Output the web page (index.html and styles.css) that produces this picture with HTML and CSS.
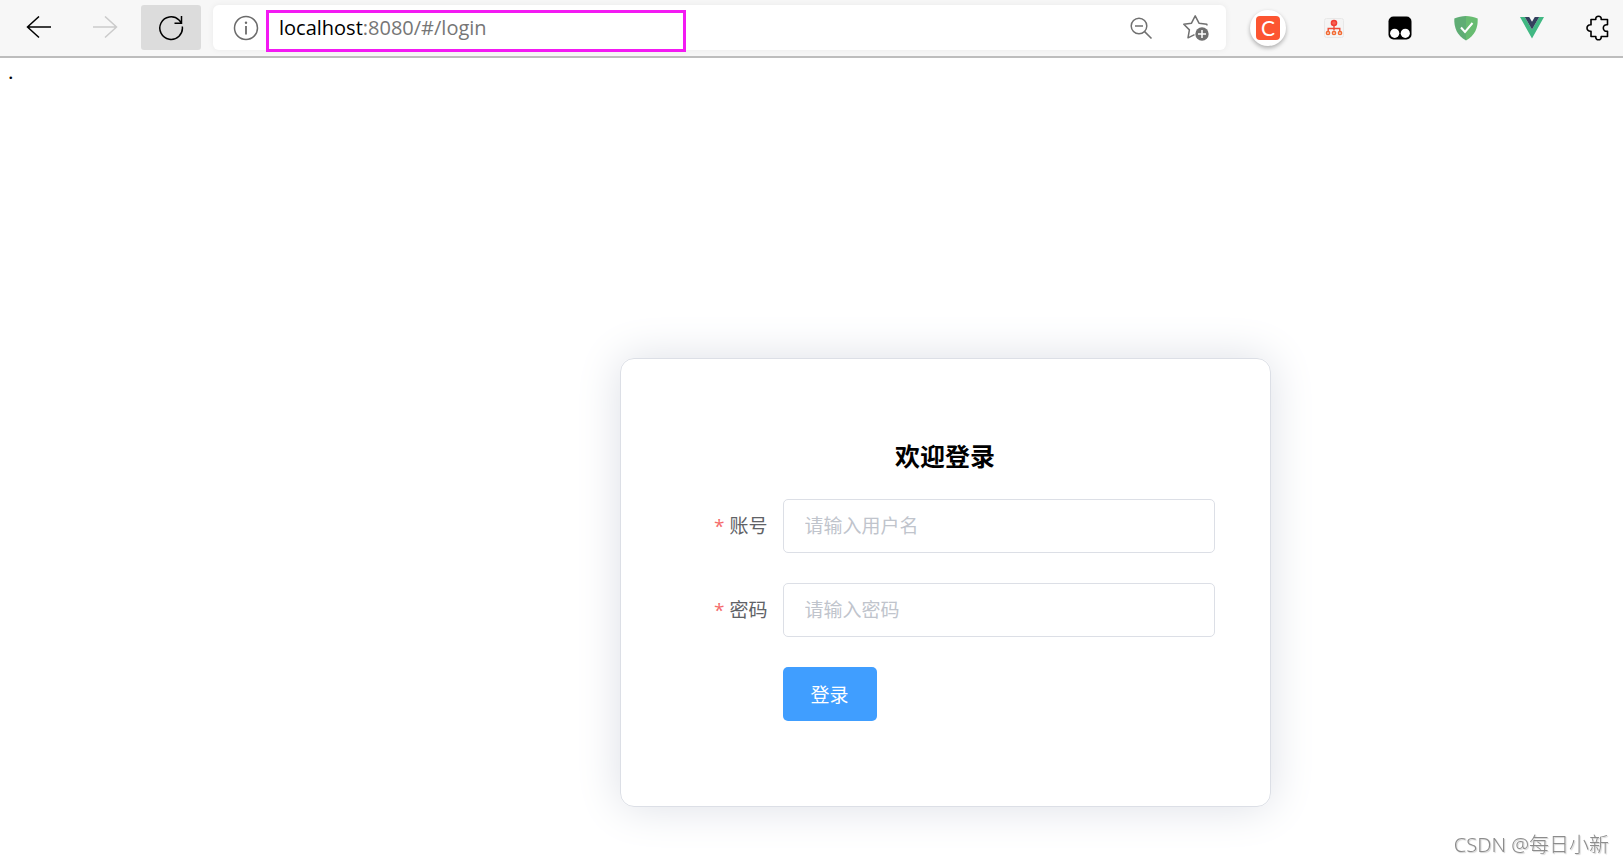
FILE: index.html
```html
<!DOCTYPE html>
<html lang="zh-CN">
<head>
<meta charset="utf-8">
<title>登录</title>
<link rel="stylesheet" href="styles.css">
</head>
<body>
<header class="toolbar">
  <nav class="nav">
    <button class="tool" type="button" aria-label="后退">
      <svg width="26" height="24" viewBox="0 0 26 24" fill="none" stroke="#000" stroke-width="1.5"><path d="M25 11H1.5M13 .5 1.500 11 13 21.500"/></svg>
    </button>
    <button class="tool" type="button" aria-label="前进" disabled>
      <svg width="26" height="24" viewBox="0 0 26 24" fill="none" stroke="#cbcbcb" stroke-width="1.500"><path d="M1 11h23.500M13 .5 24.500 11 13 21.500"/></svg>
    </button>
    <button class="tool tool-active" type="button" aria-label="刷新">
      <svg width="26" height="26" viewBox="0 0 26 26" fill="none" stroke="#000" stroke-width="1.500"><path d="M24.300 11.500A11.300 11.300 0 1 1 21 5L23.500 8M23.500 1V8.200H16.500"/></svg>
    </button>
  </nav>
  <div class="address">
    <svg width="26" height="26" viewBox="0 0 26 26" fill="none" stroke="#6b6b6b" stroke-width="1.500"><circle cx="13" cy="13" r="11.500"/><path d="M13 11v8.500" stroke-width="1.800"/><circle cx="13" cy="7.800" r="1.200" fill="#6b6b6b" stroke="none"/></svg>
    <div class="url" role="textbox" aria-label="地址" contenteditable="true" spellcheck="false"><span class="host">localhost</span>:8080/#/login</div>
    <button class="icon" type="button" aria-label="缩小">
      <svg width="24" height="24" viewBox="0 0 24 24" fill="none" stroke="#707070" stroke-width="1.500"><circle cx="10" cy="10" r="7.800"/><path d="M6 10h8M15.600 15.600 22.500 22.500"/></svg>
    </button>
    <button class="icon" type="button" aria-label="收藏">
      <svg width="28" height="28" viewBox="0 0 28 28" fill="none" stroke="#707070" stroke-width="1.500" stroke-linejoin="round"><path d="M25 11.500 24.800 10.200 17 9.200 13.200 1.800 9.500 9.200 1.800 10.300 7.400 15.900 6 23.800 12.500 20.600"/><circle cx="20" cy="20" r="6.700" fill="#707070" stroke="none"/><path d="M20 16v8M16 20h8" stroke="#fff"/></svg>
    </button>
  </div>
  <div class="extensions">
    <button class="icon round" type="button" aria-label="CSDN"><span class="logo-c">C</span></button>
    <button class="icon" type="button" aria-label="结构图">
      <svg width="20" height="20" viewBox="0 0 20 20" fill="none"><rect x=".5" y=".5" width="19" height="19" rx="2" fill="#f4f4f4" stroke="#e8e8e8"/><circle cx="10" cy="5" r="3.300" fill="#f13d32"/><path d="M8.500 5 10 3.700 11.500 5 10 6.300Z" stroke="#ff9d8c" stroke-width=".6"/><path d="M10 8v4.500M4.200 13v-2.500h11.600V13" stroke="#ef4b36" stroke-width="1.400"/><g stroke="#f36a31" stroke-width="1.500"><circle cx="4" cy="15" r="1.600"/><circle cx="10" cy="15" r="1.600"/><circle cx="16" cy="15" r="1.600"/></g></svg>
    </button>
    <button class="icon" type="button" aria-label="脚本">
      <svg width="24" height="24" viewBox="0 0 24 24"><rect x=".5" y=".5" width="23" height="23" rx="5" fill="#000"/><circle cx="6.700" cy="17.300" r="4.600" fill="#fff"/><circle cx="17.300" cy="17.300" r="4.600" fill="#fff"/></svg>
    </button>
    <button class="icon" type="button" aria-label="防护">
      <svg width="24" height="26" viewBox="0 0 24 26"><path d="M12 1C8 1 4 2 .3 3.500 0 13 3 20.500 12 25.500Z" fill="#5fad74"/><path d="M12 1c4 0 8 1 11.700 2.500C24 13 21 20.500 12 25.500Z" fill="#68bc71"/><path d="m7 12.500 4 4.500 7.500-9" fill="none" stroke="#fff" stroke-width="2"/></svg>
    </button>
    <button class="icon" type="button" aria-label="Vue">
      <svg width="24" height="22" viewBox="0 0 24 22"><path d="M0 0h4.800L12 12.500 19.200 0H24L12 21.500Z" fill="#41b883"/><path d="M4.800 0h4.400L12 4.800 14.800 0h4.400L12 12.500Z" fill="#34405e"/></svg>
    </button>
    <button class="icon" type="button" aria-label="扩展">
      <svg width="24" height="26" viewBox="0 0 24 26" fill="none" stroke="#000" stroke-width="1.600" stroke-linejoin="round"><path d="M5 4.500H9.800C9.500 2.500 10.800 1.200 12.500 1.200S15.500 2.500 15.200 4.500H21.500V9.800C19 9.300 17.300 10.800 17.300 13s1.700 3.700 4.200 3.200V21.500H15.200C15.500 23.500 14.200 24.800 12.500 24.800S9.500 23.500 9.800 21.500H5V16.200C2.500 16.500 1 15 1 13S2.500 9.500 5 9.800Z"/></svg>
    </button>
  </div>
  <div class="highlight"></div>
</header>
<main class="page">
  <span class="dot">.</span>
  <form class="card">
    <h3 class="title">欢迎登录</h3>
    <div class="row">
      <label class="label" for="user">账号</label>
      <input class="field" id="user" type="text" placeholder="请输入用户名">
    </div>
    <div class="row">
      <label class="label" for="pass">密码</label>
      <input class="field" id="pass" type="password" placeholder="请输入密码">
    </div>
    <div class="row">
      <button class="submit" type="button">登录</button>
    </div>
  </form>
</main>
<div class="watermark">CSDN @每日小新</div>
</body>
</html>
```
FILE: styles.css
```css
* { box-sizing: border-box; }
body {
  display: flex;
  flex-direction: column;
  min-height: 100vh;
  margin: 0;
  background: #fff;
  font-family: "Open Sans", "Noto Sans CJK SC", sans-serif;
}
button { border: 0; padding: 0; background: none; font-family: inherit; }

.toolbar {
  position: relative;
  display: flex;
  align-items: center;
  gap: 12px;
  height: 58px;
  padding: 0 0 1px 9px;
  background: #f7f7f7;
  border-bottom: 2px solid #bdbdbd;
}
.nav { display: flex; gap: 6px; }
.tool {
  display: flex;
  align-items: center;
  justify-content: center;
  width: 60px;
  height: 45px;
  border-radius: 3px;
}
.tool-active { background: #dcdcdc; }
.address {
  flex: 1;
  display: flex;
  align-items: center;
  height: 45px;
  padding: 0 16px 0 20px;
  background: #fff;
  border-radius: 6px;
  box-shadow: 0 0 6px rgba(0, 0, 0, 0.06);
}
.url {
  flex: 1;
  padding-left: 20px;
  font-size: 20px;
  line-height: 28px;
  color: #767676;
  outline: 0;
}
.host { color: #000; }
.icon { display: flex; align-items: center; justify-content: center; }
.address .icon { width: 28px; margin-left: 27px; }
.extensions { display: flex; align-items: center; gap: 30px; padding: 0 7px 0 12px; }
.extensions .icon { width: 36px; height: 36px; }
.extensions .round {
  border-radius: 50%;
  background: #fff;
  box-shadow: 0 2px 4px rgba(0, 0, 0, 0.3);
}
.logo-c {
  width: 24px;
  height: 24px;
  border-radius: 4px;
  background: #fc5531;
  color: #fff;
  font-family: Lato, sans-serif;
  font-size: 21px;
  line-height: 24px;
}
.highlight {
  position: absolute;
  left: 266px;
  top: 10px;
  width: 420px;
  height: 42px;
  border: 3px solid #f31af3;
  pointer-events: none;
}

.page { flex: 1; padding: 0 0 48px 267px; }
.dot {
  display: block;
  height: 300px;
  margin-left: -259px;
  font-family: "Liberation Serif", serif;
  font-size: 22px;
  line-height: 28px;
}
.card {
  width: 651px;
  margin: 0 auto;
  padding: 80px 55px 85px;
  border: 1px solid #dcdfe6;
  border-radius: 14px;
  box-shadow: 0 0 45px #dcdfe6;
}
.title {
  margin: 0 0 26px;
  font-size: 25px;
  line-height: 34px;
  text-align: center;
}
.row { display: flex; padding-left: 107px; }
.row + .row { margin-top: 30px; }
.label {
  width: 107px;
  margin-left: -107px;
  padding-right: 15px;
  font-size: 19px;
  line-height: 54px;
  color: #606266;
  text-align: right;
}
.label::before { content: "*"; margin-right: 5px; color: #f56c6c; }
.field {
  flex: 1;
  min-width: 0;
  height: 54px;
  padding: 0 21px;
  border: 1px solid #dcdfe6;
  border-radius: 5px;
  background: #fff;
  font-family: inherit;
  font-size: 19px;
  outline: 0;
}
.field::placeholder { color: #c0c4cc; opacity: 1; }
.submit {
  height: 54px;
  padding: 0 28px;
  border-radius: 5px;
  background: #409eff;
  color: #fff;
  font-size: 19px;
}
.watermark {
  position: fixed;
  right: 14px;
  bottom: 4px;
  font-family: "Noto Sans", "Noto Sans CJK SC", sans-serif;
  font-size: 20px;
  font-weight: 300;
  line-height: 28px;
  color: #8c8c8c;
  text-shadow: 1px 1px 1px #d0d0d0;
}
```
